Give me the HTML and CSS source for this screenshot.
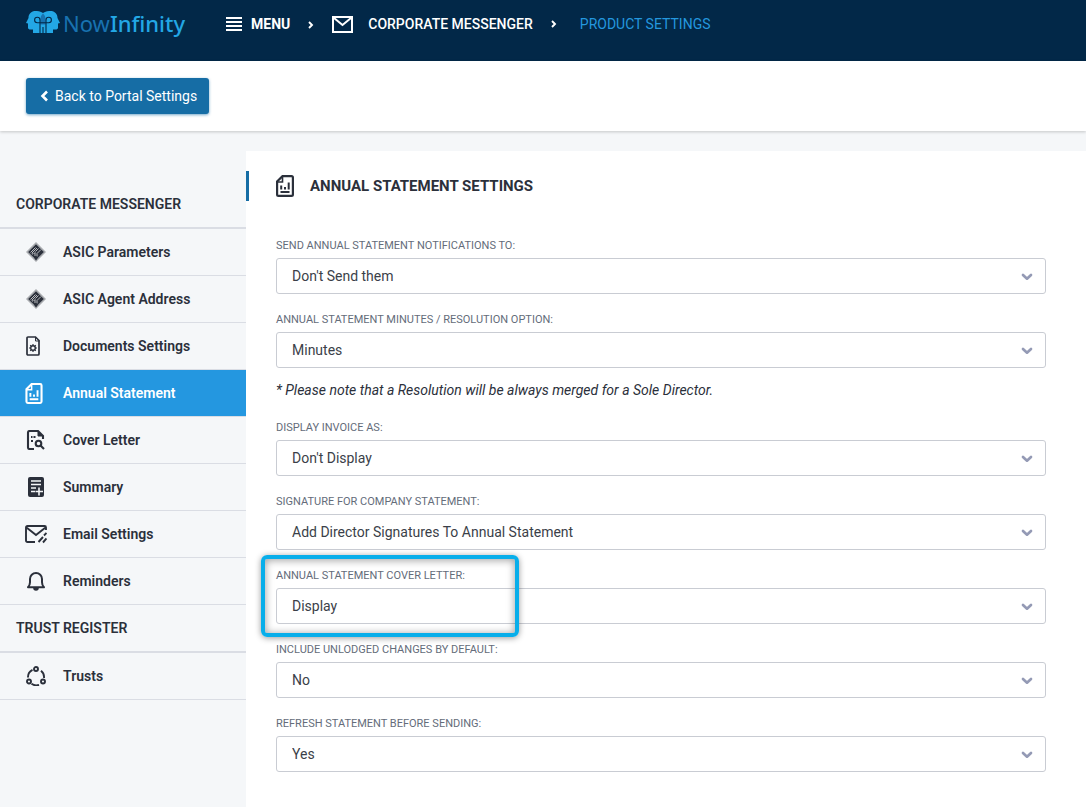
FILE: index.html
```html
<!DOCTYPE html>
<html lang="en">
<head>
<meta charset="utf-8">
<meta name="viewport" content="width=device-width, initial-scale=1">
<title>Annual Statement Settings</title>
<link rel="stylesheet" href="styles.css">
</head>
<body>
<svg class="sprite" aria-hidden="true">
  <symbol id="i-asic" viewBox="0 0 20 20">
    <path d="M10 0l10 10-10 10L0 10z" fill="#a9acb0"/>
    <path d="M10 2.200l7.800 7.800-7.800 7.800L2.200 10z" fill="#2b303b"/>
    <path d="M4.500 10.500l5-5M6.500 12.500L6 11l5-5M9 14v-3.500L7.500 12M9.500 9.500l3-3M11 14.500v-3l4-4" fill="none" stroke="#b9bbbf" stroke-width="1"/>
    <path d="M8 15.500l2-1.500 2 1.500-2 3z" fill="#2b303b"/>
  </symbol>
  <symbol id="i-doc-gear" viewBox="0 0 14 20">
    <g fill="none" stroke="currentColor">
      <path d="M1 2q0-1 1-1h7.500L13 4.500V18q0 1-1 1H2q-1 0-1-1z" stroke-width="1.700"/>
      <path d="M9.500 1v4h4"/>
      <circle cx="7" cy="12" r="2.300" stroke-width="1.400"/>
      <path d="M7 8v1.700M7 14.300V16M3 12h1.700M9.300 12H11M4.200 9.200l1.200 1.200M8.600 13.600l1.200 1.200M9.800 9.200l-1.200 1.200M5.400 13.600l-1.200 1.200" stroke-width="1.200"/>
    </g>
  </symbol>
  <symbol id="i-report" viewBox="0 0 18 22">
    <g fill="none" stroke="currentColor" stroke-width="2.200">
      <path d="M6.500 1.100H15.500q1.400 0 1.400 1.400v17q0 1.400-1.400 1.400h-13q-1.400 0-1.400-1.400v-13z"/>
      <path d="M6.500 1.500V7H1.500" stroke-width="1.600"/>
      <path d="M5.200 10.500v4M9 12v2.500M12.700 7.500v7M4.500 17h9" stroke-width="2"/>
    </g>
  </symbol>
  <symbol id="i-doc-search" viewBox="0 0 20 20">
    <g fill="none" stroke="currentColor" stroke-width="2.100">
      <path d="M8 19H3.500Q2 19 2 17.500v-15Q2 1 3.500 1H12l5 5v3"/>
      <path d="M12 1v5h5z" fill="currentColor" stroke-width="1"/>
      <circle cx="12.500" cy="13.500" r="2.800"/>
      <path d="M14.500 15.500l3.500 3.500"/>
      <path d="M5 7h1.500M7.500 7h2M5 11h2" stroke-width="2"/>
    </g>
  </symbol>
  <symbol id="i-summary" viewBox="0 0 20 20">
    <rect x="2" y="0" width="16" height="20" rx="2" fill="currentColor"/>
    <path d="M5 4h10M5 7.500h10M5 11h5M5 14.500h4M13 10.500v8M9.500 14.500h7.500" fill="none" stroke="#f5f7f9" stroke-width="1.600"/>
  </symbol>
  <symbol id="i-mail-edit" viewBox="0 0 22 18">
    <g fill="none" stroke="currentColor" stroke-width="1.900">
      <path d="M10 17H2.500Q1 17 1 15.500v-13Q1 1 2.500 1h17Q21 1 21 2.500V5M1.500 2.500L11 10l9.500-7.500"/>
      <path d="M13.500 17l4.500-5M19 10.500L21.500 8M18 17.500l3.500-4"/>
    </g>
  </symbol>
  <symbol id="i-bell" viewBox="0 0 20 20">
    <path d="M2 16.200c1.500-1.500 2-2.500 2-5V8a6 6 0 0 1 12 0v3.200c0 2.500.500 3.500 2 5z" fill="none" stroke="currentColor" stroke-width="2" stroke-linejoin="round"/>
    <path d="M7.200 17h5.600a2.800 2.800 0 0 1-5.600 0z" fill="currentColor"/>
  </symbol>
  <symbol id="i-trusts" viewBox="0 0 20 20">
    <g fill="none" stroke="currentColor" stroke-width="1.900">
      <circle cx="10" cy="3" r="2"/><circle cx="3" cy="15.500" r="2"/><circle cx="17" cy="15.500" r="2"/>
      <path d="M2 11.500a8.200 8.200 0 0 1 4.500-7.700M15 4.800a8.200 8.200 0 0 1 3 7.200M5.500 17.800a8.200 8.200 0 0 0 7.500 1"/>
    </g>
  </symbol>
  <symbol id="i-crumb" viewBox="0 0 6 8"><path d="M1 1l3 3-3 3" fill="none" stroke="currentColor" stroke-width="1.900"/></symbol>
  <symbol id="i-down" viewBox="0 0 12 8"><path d="M2 2l4 3.700L10 2" fill="none" stroke="currentColor" stroke-width="2.700" stroke-linecap="round" stroke-linejoin="round"/></symbol>
</svg>

<header class="topbar">
  <a class="logo" href="#" aria-label="NowInfinity">
    <svg class="logo-mark" viewBox="0 0 34 23" aria-hidden="true">
      <path d="M17 2C14.500.200 11.500 0 8.500 0 5 .500 2.500 3 2.500 7L0 12l2 .600v3.900c0 1.500 1 2 2.500 2H7V22h20v-3.500h2.500c1.500 0 2.500-.500 2.500-2v-3.900l2-.600-2.500-5c0-4-2.500-6.500-6-7-3 0-6 .200-8.500 2z" fill="#23a7e5"/>
      <path d="M17 2.500c-3.500 3-2.500 8-2.500 11h5c0-3 1-8-2.500-11z" fill="#1872b0"/>
      <g fill="none" stroke="#022848" stroke-width="1.100">
        <path d="M14 22V9a2.700 2.700 0 1 0-2.700 2.700h11.400A2.700 2.700 0 1 0 20 9v13"/>
        <path d="M17 16v6"/>
      </g>
    </svg>
    <span class="logo-text"><span class="logo-now">Now</span>Infinity</span>
  </a>
  <nav class="crumbs" aria-label="Breadcrumb">
    <button class="menu" type="button">
      <svg class="menu-icon" viewBox="0 0 16 14" aria-hidden="true"><path d="M0 1h16M0 5h16M0 9h16M0 13h16" stroke="currentColor" stroke-width="2"/></svg>
      MENU
    </button>
    <svg class="crumb-sep" aria-hidden="true"><use href="#i-crumb"/></svg>
    <a class="crumb" href="#">
      <svg class="mail-icon" viewBox="0 0 21 17" aria-hidden="true"><path d="M1 1h19v15H1zM2 2l8.500 7L19 2" fill="none" stroke="currentColor" stroke-width="2"/></svg>
      CORPORATE MESSENGER
    </a>
    <svg class="crumb-sep crumb-sep-last" aria-hidden="true"><use href="#i-crumb"/></svg>
    <a class="crumb current" href="#">PRODUCT SETTINGS</a>
  </nav>
</header>

<div class="actions">
  <button class="back" type="button">
    <svg class="back-icon" viewBox="0 0 8 12" aria-hidden="true"><path d="M6.500 1.500L2 6l4.500 4.500" fill="none" stroke="currentColor" stroke-width="2.600"/></svg>
    Back to Portal Settings
  </button>
</div>

<div class="layout">
  <nav class="sidebar" aria-label="Settings">
    <h2 class="group group-first">CORPORATE MESSENGER</h2>
    <a class="item" href="#"><span class="slot"><svg class="icon"><use href="#i-asic"/></svg></span>ASIC Parameters</a>
    <a class="item" href="#"><span class="slot"><svg class="icon"><use href="#i-asic"/></svg></span>ASIC Agent Address</a>
    <a class="item" href="#"><span class="slot"><svg class="icon icon-doc"><use href="#i-doc-gear"/></svg></span>Documents Settings</a>
    <a class="item active" href="#" aria-current="page"><span class="slot"><svg class="icon icon-report"><use href="#i-report"/></svg></span>Annual Statement</a>
    <a class="item" href="#"><span class="slot"><svg class="icon"><use href="#i-doc-search"/></svg></span>Cover Letter</a>
    <a class="item" href="#"><span class="slot"><svg class="icon"><use href="#i-summary"/></svg></span>Summary</a>
    <a class="item" href="#"><span class="slot"><svg class="icon"><use href="#i-mail-edit"/></svg></span>Email Settings</a>
    <a class="item" href="#"><span class="slot"><svg class="icon"><use href="#i-bell"/></svg></span>Reminders</a>
    <h2 class="group">TRUST REGISTER</h2>
    <a class="item" href="#"><span class="slot"><svg class="icon"><use href="#i-trusts"/></svg></span>Trusts</a>
  </nav>

  <main class="panel">
    <div class="title-row">
      <svg class="title-icon" aria-hidden="true"><use href="#i-report"/></svg>
      <h1 class="title">ANNUAL STATEMENT SETTINGS</h1>
    </div>
    <form class="form">
      <div class="field">
        <label class="label" for="send">SEND ANNUAL STATEMENT NOTIFICATIONS TO:</label>
        <div class="control"><select class="select" id="send"><option>Don't Send them</option></select><svg class="arrow" aria-hidden="true"><use href="#i-down"/></svg></div>
      </div>
      <div class="field">
        <label class="label" for="minutes">ANNUAL STATEMENT MINUTES / RESOLUTION OPTION:</label>
        <div class="control"><select class="select" id="minutes"><option>Minutes</option></select><svg class="arrow" aria-hidden="true"><use href="#i-down"/></svg></div>
        <p class="note">* Please note that a Resolution will be always merged for a Sole Director.</p>
      </div>
      <div class="field">
        <label class="label" for="invoice">DISPLAY INVOICE AS:</label>
        <div class="control"><select class="select" id="invoice"><option>Don't Display</option></select><svg class="arrow" aria-hidden="true"><use href="#i-down"/></svg></div>
      </div>
      <div class="field">
        <label class="label" for="signature">SIGNATURE FOR COMPANY STATEMENT:</label>
        <div class="control"><select class="select" id="signature"><option>Add Director Signatures To Annual Statement</option></select><svg class="arrow" aria-hidden="true"><use href="#i-down"/></svg></div>
      </div>
      <div class="field">
        <label class="label" for="cover">ANNUAL STATEMENT COVER LETTER:</label>
        <div class="control"><select class="select" id="cover"><option>Display</option></select><svg class="arrow" aria-hidden="true"><use href="#i-down"/></svg></div>
        <div class="highlight"></div>
      </div>
      <div class="field">
        <label class="label" for="unlodged">INCLUDE UNLODGED CHANGES BY DEFAULT:</label>
        <div class="control"><select class="select" id="unlodged"><option>No</option></select><svg class="arrow" aria-hidden="true"><use href="#i-down"/></svg></div>
      </div>
      <div class="field">
        <label class="label" for="refresh">REFRESH STATEMENT BEFORE SENDING:</label>
        <div class="control"><select class="select" id="refresh"><option>Yes</option></select><svg class="arrow" aria-hidden="true"><use href="#i-down"/></svg></div>
      </div>
    </form>
  </main>
</div>
</body>
</html>
```
FILE: styles.css
```css
* { box-sizing: border-box; }

body {
  margin: 0;
  min-height: 100vh;
  display: flex;
  flex-direction: column;
  background: #f5f7f9;
  color: #2b303b;
  font-family: Roboto, "Liberation Sans", sans-serif;
  font-size: 14px;
  line-height: 20px;
}

a { color: inherit; text-decoration: none; }
h1, h2, p { margin: 0; }
button, select { font: inherit; }
.sprite { display: none; }

.topbar {
  display: flex;
  align-items: flex-start;
  padding: 8px 26px 21px;
  background: #022848;
  color: #fff;
}

.logo {
  display: flex;
  align-items: flex-start;
  gap: 3px;
  width: 200px;
  padding-top: 3px;
  color: #23a7e5;
}
.logo-mark { width: 34px; height: 23px; }
.logo-text {
  font-family: "Noto Sans", sans-serif;
  font-size: 22px;
  font-weight: 500;
  line-height: 24px;
}
.logo-now { color: #1872b0; font-weight: 400; }

.crumbs {
  display: flex;
  align-items: center;
  height: 32px;
  white-space: nowrap;
}
.menu {
  display: flex;
  align-items: center;
  gap: 9px;
  padding: 0;
  border: 0;
  background: none;
  color: inherit;
  font-weight: 700;
}
.menu-icon { width: 16px; height: 14px; }
.crumb-sep { width: 6px; height: 8px; margin: 2px 18px 0; }
.crumb-sep-last { margin: 0 23px 0 18px; }
.crumb {
  display: flex;
  align-items: center;
  gap: 15px;
  font-weight: 500;
}
.mail-icon { width: 21px; height: 17px; }
.current { color: #2497df; font-weight: 400; }

.actions {
  padding: 17px 26px;
  background: #fff;
  box-shadow: 0 1px 3px rgba(0, 0, 0, 0.2);
}
.back {
  display: flex;
  align-items: center;
  gap: 6px;
  height: 36px;
  padding: 0 12px 0 14px;
  border: 0;
  border-radius: 3px;
  background: #166da5;
  color: #fff;
  box-shadow: 0 1px 3px rgba(22, 109, 165, 0.6);
}
.back-icon { width: 9px; height: 12px; }

.layout { display: flex; flex: 1; }

.sidebar { width: 246px; flex-shrink: 0; }
.group {
  padding: 13px 16px;
  border-bottom: 2px solid #dadde4;
  font-size: 14px;
  font-weight: 600;
  line-height: 20px;
}
.group-first { padding-top: 63px; }
.item {
  display: flex;
  align-items: center;
  height: 47px;
  padding-left: 25px;
  border-bottom: 1px solid #dadde4;
  font-weight: 600;
}
.active {
  background: #2497e0;
  color: #fff;
}
.slot { display: flex; width: 38px; }
.icon { width: 22px; height: 20px; }
.icon-doc { width: 16px; }
.icon-report { width: 18px; height: 21px; }

.panel {
  flex: 1;
  min-width: 0;
  margin-top: 20px;
  padding: 20px 40px 20px 0;
  background: #fff;
}
.title-row {
  display: flex;
  align-items: center;
  gap: 16px;
  min-height: 30px;
  padding-left: 27px;
  border-left: 3px solid #166da5;
}
.title-icon { width: 18px; height: 22px; }
.title {
  font-size: 15px;
  font-weight: 700;
  line-height: 20px;
}

.form {
  display: flex;
  flex-direction: column;
  gap: 15px;
  padding: 35px 0 0 30px;
}
.field { position: relative; }
.label {
  display: block;
  margin-bottom: 2px;
  color: #646c7a;
  font-size: 11px;
  line-height: 20px;
}
.field + .field { padding-top: 1px; }
.control { display: grid; align-items: center; }
.select {
  grid-area: 1 / 1;
  width: 100%;
  height: 36px;
  padding: 0 40px 0 15px;
  border: 1px solid #c9ccd3;
  border-radius: 3px;
  background: #fff;
  color: #3b3f49;
  appearance: none;
}
.arrow {
  grid-area: 1 / 1;
  justify-self: end;
  width: 12px;
  height: 8px;
  margin: 2px 13px 0 0;
  color: #949ab5;
  pointer-events: none;
}
.note {
  padding: 12px 0 2px;
  font-style: italic;
}
.highlight {
  position: absolute;
  top: -10px;
  left: -15px;
  width: 258px;
  height: 82px;
  border: 4px solid #08aeea;
  border-radius: 6px;
  box-shadow: 0 1px 6px rgba(0, 0, 0, 0.4), inset 0 1px 8px rgba(0, 0, 0, 0.4);
  pointer-events: none;
}
```
